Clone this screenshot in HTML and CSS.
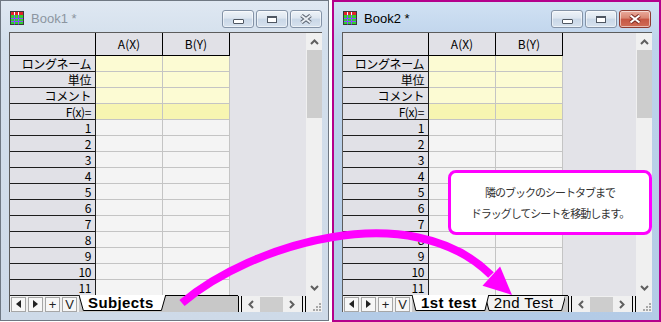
FILE: index.html
```html
<!DOCTYPE html>
<html lang="ja">
<head>
  <meta charset="UTF-8" />
  <title>Origin - シートの移動</title>
  <link rel="stylesheet" href="styles.css">
</head>
<body>
<div class="desk">

  <!-- Book1 (inactive) -->
  <div class="win inactive">
    <div class="titlebar">
      <svg class="book-icon" viewBox="0 0 14 14" width="14" height="14">
        <rect x="0.5" y="0.5" width="13" height="13" fill="#2fd12f" stroke="#3a3a3a"/>
        <rect x="1" y="1" width="12" height="3" fill="#fff"/>
        <rect x="1" y="1" width="3" height="3" fill="#e2232a"/>
        <rect x="5" y="1" width="3" height="3" fill="#e2232a"/>
        <rect x="9" y="1" width="4" height="3" fill="#e2232a"/>
        <path d="M4.5 4v9.5M8.5 4v9.5M1 7.5h12M1 10.5h12" stroke="#8a4cff" stroke-width="1"/>
      </svg>
      <span class="title">Book1 *</span>
      <div class="caption">
        <span class="cbtn"><i class="g-min"></i></span>
        <span class="cbtn"><i class="g-max"></i></span>
        <span class="cbtn"><svg class="g-close" viewBox="0 0 14 10" width="14" height="10"><path d="M2.5 1.5l9 7M11.5 1.5l-9 7" stroke="#5b6470" stroke-width="4"/><path d="M2.5 1.5l9 7M11.5 1.5l-9 7" stroke="#e9eef4" stroke-width="2"/></svg></span>
      </div>
    </div>
    <div class="client">
      <div class="sheet-area">
        <div class="sheet"><div class="cells"></div></div>
        <div class="vscroll">
          <span class="sb-btn"><svg viewBox="0 0 9 6" width="9" height="6"><path d="M1 5l3.5-3.5L8 5" fill="none" stroke="#5f5f5f" stroke-width="2"/></svg></span>
          <span class="vthumb"></span>
          <span class="sb-btn down"><svg viewBox="0 0 9 6" width="9" height="6"><path d="M1 1l3.5 3.5L8 1" fill="none" stroke="#5f5f5f" stroke-width="2"/></svg></span>
        </div>
      </div>
      <div class="tabbar">
        <div class="nav">
          <span class="nbtn"><svg viewBox="0 0 5 8" width="5" height="8"><path d="M5 0v8L0 4z" fill="#222"/></svg></span>
          <span class="nbtn"><svg viewBox="0 0 5 8" width="5" height="8"><path d="M0 0v8l5-4z" fill="#222"/></svg></span>
          <span class="nbtn">+</span>
          <span class="nbtn">V</span>
        </div>
        <div class="tabs">
          <span class="tab active"><svg class="tab-shape" viewBox="0 0 100 16" preserveAspectRatio="none"><path d="M0 0L5 15.5H95L100 0" vector-effect="non-scaling-stroke"/></svg><b>Subjects</b></span>
        </div>
        <span class="split"></span>
        <div class="hscroll">
          <span class="sb-btn"><svg viewBox="0 0 6 9" width="6" height="9"><path d="M5 1L1.5 4.5L5 8" fill="none" stroke="#5f5f5f" stroke-width="2"/></svg></span>
          <span class="hthumb"></span>
          <span class="sb-btn"><svg viewBox="0 0 6 9" width="6" height="9"><path d="M1 1l3.5 3.5L1 8" fill="none" stroke="#5f5f5f" stroke-width="2"/></svg></span>
        </div>
        <span class="split"></span>
        <span class="grip"><svg viewBox="0 0 10 10" width="10" height="10" fill="#a8a8a8"><rect x="7" y="1" width="2" height="2"/><rect x="4" y="4" width="2" height="2"/><rect x="7" y="4" width="2" height="2"/><rect x="1" y="7" width="2" height="2"/><rect x="4" y="7" width="2" height="2"/><rect x="7" y="7" width="2" height="2"/></svg></span>
      </div>
    </div>
  </div>

  <!-- Book2 (active) -->
  <div class="win active">
    <div class="titlebar">
      <svg class="book-icon" viewBox="0 0 14 14" width="14" height="14">
        <rect x="0.5" y="0.5" width="13" height="13" fill="#2fd12f" stroke="#3a3a3a"/>
        <rect x="1" y="1" width="12" height="3" fill="#fff"/>
        <rect x="1" y="1" width="3" height="3" fill="#e2232a"/>
        <rect x="5" y="1" width="3" height="3" fill="#e2232a"/>
        <rect x="9" y="1" width="4" height="3" fill="#e2232a"/>
        <path d="M4.5 4v9.5M8.5 4v9.5M1 7.5h12M1 10.5h12" stroke="#8a4cff" stroke-width="1"/>
      </svg>
      <span class="title">Book2 *</span>
      <div class="caption">
        <span class="cbtn"><i class="g-min"></i></span>
        <span class="cbtn"><i class="g-max"></i></span>
        <span class="cbtn close"><svg class="g-close" viewBox="0 0 14 10" width="14" height="10"><path d="M2.5 1.5l9 7M11.5 1.5l-9 7" stroke="#7a2a22" stroke-width="4"/><path d="M2.5 1.5l9 7M11.5 1.5l-9 7" stroke="#fff" stroke-width="2"/></svg></span>
      </div>
    </div>
    <div class="client">
      <div class="sheet-area">
        <div class="sheet"><div class="cells"></div></div>
        <div class="vscroll">
          <span class="sb-btn"><svg viewBox="0 0 9 6" width="9" height="6"><path d="M1 5l3.5-3.5L8 5" fill="none" stroke="#5f5f5f" stroke-width="2"/></svg></span>
          <span class="vthumb"></span>
          <span class="sb-btn down"><svg viewBox="0 0 9 6" width="9" height="6"><path d="M1 1l3.5 3.5L8 1" fill="none" stroke="#5f5f5f" stroke-width="2"/></svg></span>
        </div>
      </div>
      <div class="tabbar">
        <div class="nav">
          <span class="nbtn"><svg viewBox="0 0 5 8" width="5" height="8"><path d="M5 0v8L0 4z" fill="#222"/></svg></span>
          <span class="nbtn"><svg viewBox="0 0 5 8" width="5" height="8"><path d="M0 0v8l5-4z" fill="#222"/></svg></span>
          <span class="nbtn">+</span>
          <span class="nbtn">V</span>
        </div>
        <div class="tabs">
          <span class="tab active"><svg class="tab-shape" viewBox="0 0 100 16" preserveAspectRatio="none"><path d="M0 0L5 15.5H95L100 0" vector-effect="non-scaling-stroke"/></svg><b>1st test</b></span>
          <span class="tab"><svg class="tab-shape" viewBox="0 0 100 16" preserveAspectRatio="none"><path d="M0 0.5L5 15.5H95L100 0.5Z" vector-effect="non-scaling-stroke"/></svg>2nd Test</span>
        </div>
        <span class="split"></span>
        <div class="hscroll">
          <span class="sb-btn"><svg viewBox="0 0 6 9" width="6" height="9"><path d="M5 1L1.5 4.5L5 8" fill="none" stroke="#5f5f5f" stroke-width="2"/></svg></span>
          <span class="hthumb"></span>
          <span class="sb-btn"><svg viewBox="0 0 6 9" width="6" height="9"><path d="M1 1l3.5 3.5L1 8" fill="none" stroke="#5f5f5f" stroke-width="2"/></svg></span>
        </div>
        <span class="split"></span>
        <span class="grip"><svg viewBox="0 0 10 10" width="10" height="10" fill="#a8a8a8"><rect x="7" y="1" width="2" height="2"/><rect x="4" y="4" width="2" height="2"/><rect x="7" y="4" width="2" height="2"/><rect x="1" y="7" width="2" height="2"/><rect x="4" y="7" width="2" height="2"/><rect x="7" y="7" width="2" height="2"/></svg></span>
      </div>
    </div>
  </div>

  <div class="callout">
    <p>隣のブックのシートタブまで</p>
    <p>ドラッグしてシートを移動します。</p>
  </div>

  <svg class="drag-arrow" viewBox="0 0 661 322" width="661" height="322">
    <path d="M182 303C250 245 410 195 491 275" fill="none" stroke="#ff00ff" stroke-width="8"/>
    <polygon points="512,295 482.5,285.7 500.1,266.5" fill="#ff00ff"/>
  </svg>
</div>

<script>
  const rows = [
    ["ロングネーム", "meta"],
    ["単位", "meta"],
    ["コメント", "meta"],
    ["F(x)=", "fx"]
  ];
  for (let i = 1; i <= 11; i++) rows.push([String(i), "num"]);

  document.querySelectorAll(".cells").forEach(grid => {
    let html = '<div class="corner"></div><div class="colhead">A(X)</div><div class="colhead">B(Y)</div>';
    rows.forEach(([label, kind]) => {
      html += `<div class="rowhead">${label}</div><div class="cell ${kind}"></div><div class="cell ${kind}"></div>`;
    });
    grid.innerHTML = html;
  });
</script>
</body>
</html>
```

FILE: styles.css
```css
body {
  margin: 0;
  background: #fff;
  font-family: "Liberation Sans", Arial, sans-serif;
}

.desk {
  position: relative;
  width: 661px;
  height: 322px;
  display: flex;
  align-items: flex-start;
  gap: 3px;
  overflow: hidden;
}

/* window frames */
.win {
  box-sizing: border-box;
  width: 329px;
  display: flex;
  flex-direction: column;
}

.win.inactive {
  height: 321px;
  border: 1px solid #6f7883;
  background: linear-gradient(#dfe8f2, #d3dfec 40px, #cedae8);
}

.win.active {
  height: 322px;
  border: 2px solid #b4008c;
  background: linear-gradient(#d0e1f3, #bed3eb 40px, #b3cbe6);
}

.titlebar {
  box-sizing: border-box;
  height: 31px;
  display: flex;
  align-items: flex-start;
  padding: 9px 6px 0 9px;
}

.active .titlebar {
  height: 30px;
  padding: 8px 8px 0 9px;
}

.book-icon {
  margin-top: 1px;
}

.title {
  margin-left: 7px;
  font-size: 13px;
  line-height: 18px;
  color: #8c95a0;
}

.active .title {
  color: #000;
}

.caption {
  margin-left: auto;
  display: flex;
  gap: 2px;
}

.cbtn {
  box-sizing: border-box;
  width: 32px;
  height: 18px;
  border: 1px solid #8493a7;
  border-radius: 3px;
  background: linear-gradient(#eef3f8, #dde6f0 45%, #c9d7e7 50%, #d7e2ee);
  box-shadow: inset 0 0 0 1px rgba(255, 255, 255, 0.55);
  display: flex;
  align-items: center;
  justify-content: center;
}

.cbtn.close {
  border-color: #8e3b31;
  background: linear-gradient(#eaab9d, #d98672 45%, #c65643 50%, #d06c56);
}

.g-min {
  width: 9px;
  height: 3px;
  margin-top: 5px;
  border: 1px solid #4f5762;
  border-radius: 1px;
  background: #fff;
}

.g-max {
  width: 8px;
  height: 4px;
  border: 1px solid #4f5762;
  border-top-width: 2px;
  background: #fff;
}

/* worksheet client area */
.client {
  flex: 1;
  display: flex;
  flex-direction: column;
  margin: 0 6px 8px 8px;
  border-top: 1px solid #5c5c5c;
  border-left: 1px solid #5c5c5c;
}

.active .client {
  margin: 0 7px 8px 8px;
}

.sheet-area {
  display: flex;
  height: 263px;
}

.sheet {
  flex: 1;
  background: #e3e3e8;
}

.cells {
  display: grid;
  grid-template-columns: 86px 67px 67px;
  grid-template-rows: 23px;
  grid-auto-rows: 16px;
  width: 220px;
  font-family: "Noto Sans CJK JP", sans-serif;
  font-size: 12px;
  color: #000;
}

.cells > div {
  box-sizing: border-box;
  border-right: 1px solid #c4c4c4;
  border-bottom: 1px solid #c4c4c4;
}

.cells .corner,
.cells .colhead {
  background: #e1e1e7;
  border-color: #000;
}

.cells .colhead {
  text-align: center;
  line-height: 22px;
}

.cells .rowhead {
  background: #e1e1e7;
  border-color: #1e1e1e;
  text-align: right;
  padding-right: 4px;
  line-height: 15px;
  letter-spacing: -0.4px;
}

.cell.meta {
  background: #fcfbd3;
}

.cell.fx {
  background: #f7f5b1;
}

.cell.num {
  background: #f4f4f4;
}

/* scroll bars */
.vscroll {
  width: 16px;
  background: #f0f0f0;
  display: flex;
  flex-direction: column;
  align-items: flex-end;
}

.sb-btn {
  display: flex;
  align-items: center;
  justify-content: center;
  width: 15px;
  height: 17px;
}

.vscroll .down {
  margin-top: auto;
}

.vthumb {
  width: 15px;
  height: 68px;
  background: #cdcdcd;
}

.tabbar {
  display: flex;
  height: 16px;
  background: #f0f0f0;
}

.nav {
  width: 69px;
  display: flex;
  gap: 2px;
  padding-left: 1px;
  box-sizing: border-box;
  align-items: center;
}

.nbtn {
  box-sizing: border-box;
  width: 15px;
  height: 15px;
  border: 1px solid #a6a6a6;
  background: #f7f7f7;
  display: flex;
  align-items: center;
  justify-content: center;
  font-size: 13px;
  line-height: 13px;
  color: #222;
}

.tabs {
  flex: 1;
  display: flex;
  background: #c8c8c8;
  border-top: 1px solid #000;
  margin-top: -1px;
}

.tab {
  position: relative;
  height: 16px;
  padding: 0 12px 0 9px;
  font-size: 15px;
  line-height: 16px;
  letter-spacing: 0.4px;
  color: #000;
  margin-top: -1px;
}

.tab b,
.tab {
  z-index: 1;
}

.tab.active {
  z-index: 2;
}

.tab + .tab {
  margin-left: -4px;
}

.tab-shape {
  position: absolute;
  inset: 0;
  width: 100%;
  height: 100%;
  z-index: -1;
  fill: #f2f2f2;
  stroke: #000;
  stroke-width: 1;
}

.tab.active .tab-shape {
  fill: #fff;
}

.tab b {
  position: relative;
}

.split {
  width: 2px;
  border-left: 1px solid #000;
  border-right: 1px solid #000;
}

.hscroll {
  width: 60px;
  display: flex;
  align-items: center;
}

.hscroll .sb-btn {
  width: 17px;
  height: 16px;
}

.hthumb {
  width: 23px;
  height: 15px;
  margin-left: 1px;
  background: #cdcdcd;
}

.grip {
  width: 16px;
  display: flex;
  align-items: flex-end;
  justify-content: flex-end;
}

/* overlays */
.callout {
  position: absolute;
  left: 448px;
  top: 170px;
  box-sizing: border-box;
  width: 204px;
  height: 65px;
  border: 3px solid #ff00ff;
  border-radius: 8px;
  background: #fff;
  display: flex;
  flex-direction: column;
  justify-content: center;
  align-items: center;
  gap: 4px;
  font-family: "Noto Sans CJK JP", sans-serif;
  font-size: 11px;
  letter-spacing: -1px;
  color: #333;
}

.callout p {
  margin: 0;
  line-height: 17px;
}

.drag-arrow {
  position: absolute;
  left: 0;
  top: 0;
  pointer-events: none;
}
```
